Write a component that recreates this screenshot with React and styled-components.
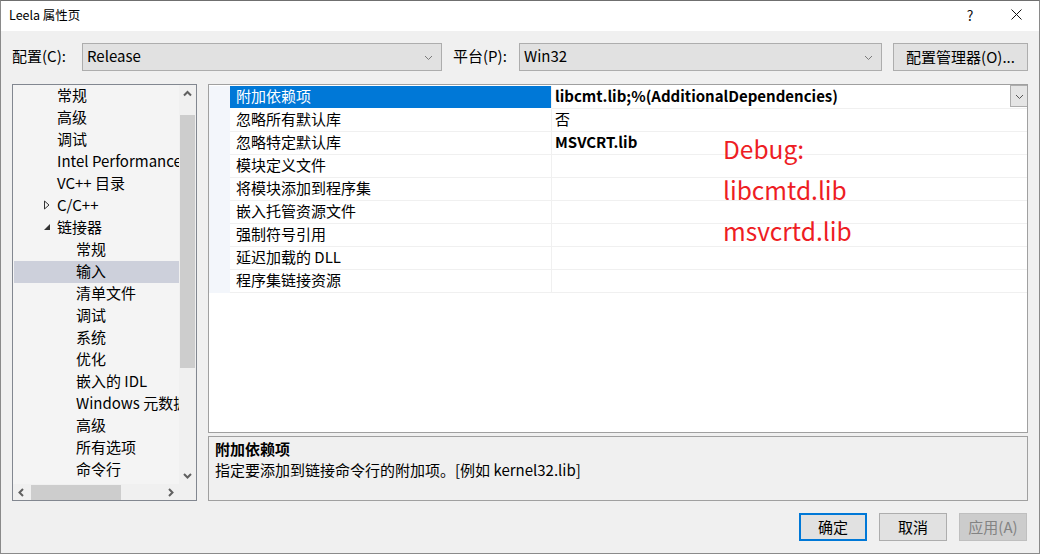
import React from "react";
import styled, { createGlobalStyle } from "styled-components";

const FONT = `"Noto Sans CJK SC", "Noto Sans", sans-serif`;

const Global = createGlobalStyle`
  html, body { margin: 0; padding: 0; background: #ffffff; }
  body { font-family: ${FONT}; }
  * { box-sizing: border-box; }
`;

const Window = styled.div`
  width: 1040px;
  height: 554px;
  border: 1px solid #8a8a8a;
  border-top-color: #6f6f6f;
  display: flex;
  flex-direction: column;
  background: #f0f0f0;
  font-family: ${FONT};
  color: #000;
  overflow: hidden;
`;

const TitleBar = styled.div`
  height: 30px;
  flex: none;
  background: #ffffff;
  display: flex;
  align-items: center;
  padding-left: 8px;
  padding-bottom: 3px;
  font-size: 12.5px;
`;

const TitleText = styled.div`
  flex: 1;
`;

const TitleButton = styled.div`
  width: 46px;
  height: 27px;
  display: flex;
  align-items: center;
  justify-content: center;
  font-size: 14px;
  color: #111;
`;

const Body = styled.div`
  flex: 1;
  display: flex;
  flex-direction: column;
  padding: 12px 12px 0 11px;
`;

const ConfigRow = styled.div`
  display: flex;
  align-items: center;
  height: 28px;
  font-size: 15px;
`;

const Label = styled.div`
  width: ${(p) => p.$w}px;
  flex: none;
  padding-bottom: 3px;
`;

const Select = styled.div`
  width: ${(p) => p.$w}px;
  height: 28px;
  flex: none;
  background: #e1e1e1;
  border: 1px solid #adadad;
  display: flex;
  align-items: center;
  padding: 0 8px 0 4px;
  margin-right: ${(p) => p.$mr || 0}px;
`;

const SelectText = styled.div`
  flex: 1;
  padding-bottom: 3px;
`;

const Button = styled.div`
  width: ${(p) => p.$w}px;
  height: 28px;
  flex: none;
  display: flex;
  align-items: center;
  justify-content: center;
  font-size: 15px;
  padding-bottom: 2px;
  background: ${(p) => (p.$disabled ? "#cccccc" : "#e1e1e1")};
  color: ${(p) => (p.$disabled ? "#838383" : "#000")};
  border: ${(p) =>
    p.$default ? "2px solid #0078d7" : p.$disabled ? "1px solid #bfbfbf" : "1px solid #adadad"};
`;

const Main = styled.div`
  display: flex;
  gap: 11px;
  margin-top: 13px;
  height: 417px;
`;

const TreeBox = styled.div`
  width: 185px;
  flex: none;
  border: 1px solid #828790;
  display: grid;
  grid-template-columns: 1fr 17px;
  grid-template-rows: 1fr 16px;
  background: #f0f0f0;
`;

const TreeList = styled.div`
  background: #f4f4f4;
  overflow: hidden;
  padding: 0 0 0 1px;
  font-size: 15px;
`;

const TreeItem = styled.div`
  height: 22px;
  display: flex;
  align-items: center;
  white-space: nowrap;
  padding-left: ${(p) => p.$indent}px;
  padding-bottom: 3px;
  background: ${(p) => (p.$selected ? "#cdd0db" : "transparent")};
  position: relative;
`;

const Expander = styled.span`
  position: absolute;
  left: ${(p) => p.$left}px;
  top: 5px;
  width: 10px;
  height: 10px;
  display: flex;
  align-items: center;
  justify-content: center;
`;

const VScroll = styled.div`
  background: #f0f0f0;
  display: flex;
  flex-direction: column;
  align-items: center;
`;

const ScrollArrow = styled.div`
  width: 17px;
  height: ${(p) => p.$h || 17}px;
  flex: none;
  display: flex;
  align-items: center;
  justify-content: center;
`;

const VTrack = styled.div`
  flex: 1;
  width: 15px;
  padding-top: 13px;
`;

const VThumb = styled.div`
  width: 15px;
  height: 253px;
  background: #cdcdcd;
`;

const HScroll = styled.div`
  background: #f0f0f0;
  display: flex;
  align-items: center;
`;

const HTrack = styled.div`
  flex: 1;
  height: 15px;
  padding-left: 1px;
`;

const HThumb = styled.div`
  width: 90px;
  height: 15px;
  background: #cdcdcd;
`;

const Corner = styled.div`
  background: #f0f0f0;
`;

const RightCol = styled.div`
  width: 820px;
  flex: none;
  display: flex;
  flex-direction: column;
  gap: 3px;
`;

const Grid = styled.div`
  height: 349px;
  flex: none;
  border: 1px solid #a0a0a0;
  background: #ffffff;
  padding-top: 1px;
  position: relative;
  font-size: 15px;
`;

const Row = styled.div`
  display: flex;
  height: 23px;
`;

const Margin = styled.div`
  width: 21px;
  flex: none;
  background: #f3f6fb;
`;

const NameCell = styled.div`
  width: 322px;
  flex: none;
  padding-left: 6px;
  padding-bottom: 3px;
  display: flex;
  align-items: center;
  background: ${(p) => (p.$selected ? "#0078d7" : "#ffffff")};
  color: ${(p) => (p.$selected ? "#ffffff" : "#000")};
  border-bottom: 1px solid ${(p) => (p.$selected ? "#ffffff" : "#f0f0f0")};
  border-right: 1px solid #f0f0f0;
`;

const ValueCell = styled.div`
  flex: 1;
  display: flex;
  align-items: center;
  padding-left: 3px;
  font-weight: ${(p) => (p.$bold ? 700 : 400)};
  border-bottom: 1px solid #f0f0f0;
`;

const ValueText = styled.div`
  flex: 1;
  white-space: nowrap;
  padding-bottom: 3px;
`;

const DropButton = styled.div`
  width: 17px;
  height: 22px;
  align-self: flex-start;
  margin-top: -1px;
  background: #e5e5e5;
  border: 1px solid #adadad;
  border-right: none;
  display: flex;
  align-items: center;
  justify-content: center;
`;

const Annotation = styled.div`
  position: absolute;
  left: 514px;
  top: 43px;
  color: #ee1d24;
  font-size: 24.5px;
  line-height: 41px;
`;

const Desc = styled.div`
  flex: 1;
  border: 1px solid #a0a0a0;
  background: #f0f0f0;
  padding: 1px 6px;
  font-size: 15px;
  line-height: 21px;
`;

const DescTitle = styled.div`
  font-weight: 700;
`;

const Footer = styled.div`
  display: flex;
  justify-content: flex-end;
  gap: 12px;
  margin-top: 12px;
`;

const Chevron = ({ dir = "down", size = 9, color = "#606060", stroke = 1 }) => {
  const pts = {
    down: "1,3 4.5,6.5 8,3",
    up: "1,6.5 4.5,3 8,6.5",
    left: "6,1 2.5,4.5 6,8",
    right: "3,1 6.5,4.5 3,8",
  }[dir];
  return (
    <svg width={size} height={size} viewBox="0 0 9 9">
      <polyline points={pts} fill="none" stroke={color} strokeWidth={stroke} />
    </svg>
  );
};

const treeItems = [
  { t: "常规", i: 43 },
  { t: "高级", i: 43 },
  { t: "调试", i: 43 },
  { t: "Intel Performance Libraries", i: 43 },
  { t: "VC++ 目录", i: 43 },
  { t: "C/C++", i: 43, exp: "closed" },
  { t: "链接器", i: 43, exp: "open" },
  { t: "常规", i: 62 },
  { t: "输入", i: 62, sel: true },
  { t: "清单文件", i: 62 },
  { t: "调试", i: 62 },
  { t: "系统", i: 62 },
  { t: "优化", i: 62 },
  { t: "嵌入的 IDL", i: 62 },
  { t: "Windows 元数据", i: 62 },
  { t: "高级", i: 62 },
  { t: "所有选项", i: 62 },
  { t: "命令行", i: 62 },
];

const rows = [
  { n: "附加依赖项", v: "libcmt.lib;%(AdditionalDependencies)", bold: true, sel: true },
  { n: "忽略所有默认库", v: "否" },
  { n: "忽略特定默认库", v: "MSVCRT.lib", bold: true },
  { n: "模块定义文件", v: "" },
  { n: "将模块添加到程序集", v: "" },
  { n: "嵌入托管资源文件", v: "" },
  { n: "强制符号引用", v: "" },
  { n: "延迟加载的 DLL", v: "" },
  { n: "程序集链接资源", v: "" },
];

export default function App() {
  return (
    <>
      <Global />
      <Window>
        <TitleBar>
          <TitleText>Leela 属性页</TitleText>
          <TitleButton>?</TitleButton>
          <TitleButton>
            <svg width="11" height="11" viewBox="0 0 11 11">
              <path d="M0.5 0.5 L10.5 10.5 M10.5 0.5 L0.5 10.5" stroke="#111" strokeWidth="1" />
            </svg>
          </TitleButton>
        </TitleBar>
        <Body>
          <ConfigRow>
            <Label $w={70}>配置(C):</Label>
            <Select $w={360} $mr={11}>
              <SelectText>Release</SelectText>
              <Chevron dir="down" color="#7a7a7a" />
            </Select>
            <Label $w={66}>平台(P):</Label>
            <Select $w={363} $mr={11}>
              <SelectText>Win32</SelectText>
              <Chevron dir="down" color="#7a7a7a" />
            </Select>
            <Button $w={135}>配置管理器(O)...</Button>
          </ConfigRow>
          <Main>
            <TreeBox>
              <TreeList>
                {treeItems.map((it, k) => (
                  <TreeItem key={k} $indent={it.i} $selected={it.sel}>
                    {it.exp === "closed" && (
                      <Expander $left={28}>
                        <svg width="8" height="10" viewBox="0 0 8 10">
                          <path d="M1.5 1 L6 5 L1.5 9 Z" fill="none" stroke="#333" strokeWidth="1" />
                        </svg>
                      </Expander>
                    )}
                    {it.exp === "open" && (
                      <Expander $left={28}>
                        <svg width="8" height="8" viewBox="0 0 8 8">
                          <path d="M7 1 L7 7 L1 7 Z" fill="#333" />
                        </svg>
                      </Expander>
                    )}
                    {it.t}
                  </TreeItem>
                ))}
              </TreeList>
              <VScroll>
                <ScrollArrow>
                  <Chevron dir="up" stroke={2} />
                </ScrollArrow>
                <VTrack>
                  <VThumb />
                </VTrack>
                <ScrollArrow>
                  <Chevron dir="down" stroke={2} />
                </ScrollArrow>
              </VScroll>
              <HScroll>
                <ScrollArrow>
                  <Chevron dir="left" stroke={2} />
                </ScrollArrow>
                <HTrack>
                  <HThumb />
                </HTrack>
                <ScrollArrow>
                  <Chevron dir="right" stroke={2} />
                </ScrollArrow>
              </HScroll>
              <Corner />
            </TreeBox>
            <RightCol>
              <Grid>
                {rows.map((r, k) => (
                  <Row key={k}>
                    <Margin />
                    <NameCell $selected={r.sel}>{r.n}</NameCell>
                    <ValueCell $bold={r.bold}>
                      <ValueText>{r.v}</ValueText>
                      {r.sel && (
                        <DropButton>
                          <Chevron dir="down" color="#555" />
                        </DropButton>
                      )}
                    </ValueCell>
                  </Row>
                ))}
                <Annotation>
                  <div>Debug:</div>
                  <div>libcmtd.lib</div>
                  <div>msvcrtd.lib</div>
                </Annotation>
              </Grid>
              <Desc>
                <DescTitle>附加依赖项</DescTitle>
                <div>指定要添加到链接命令行的附加项。[例如 kernel32.lib]</div>
              </Desc>
            </RightCol>
          </Main>
          <Footer>
            <Button $w={68} $default>确定</Button>
            <Button $w={68}>取消</Button>
            <Button $w={68} $disabled>应用(A)</Button>
          </Footer>
        </Body>
      </Window>
    </>
  );
}
